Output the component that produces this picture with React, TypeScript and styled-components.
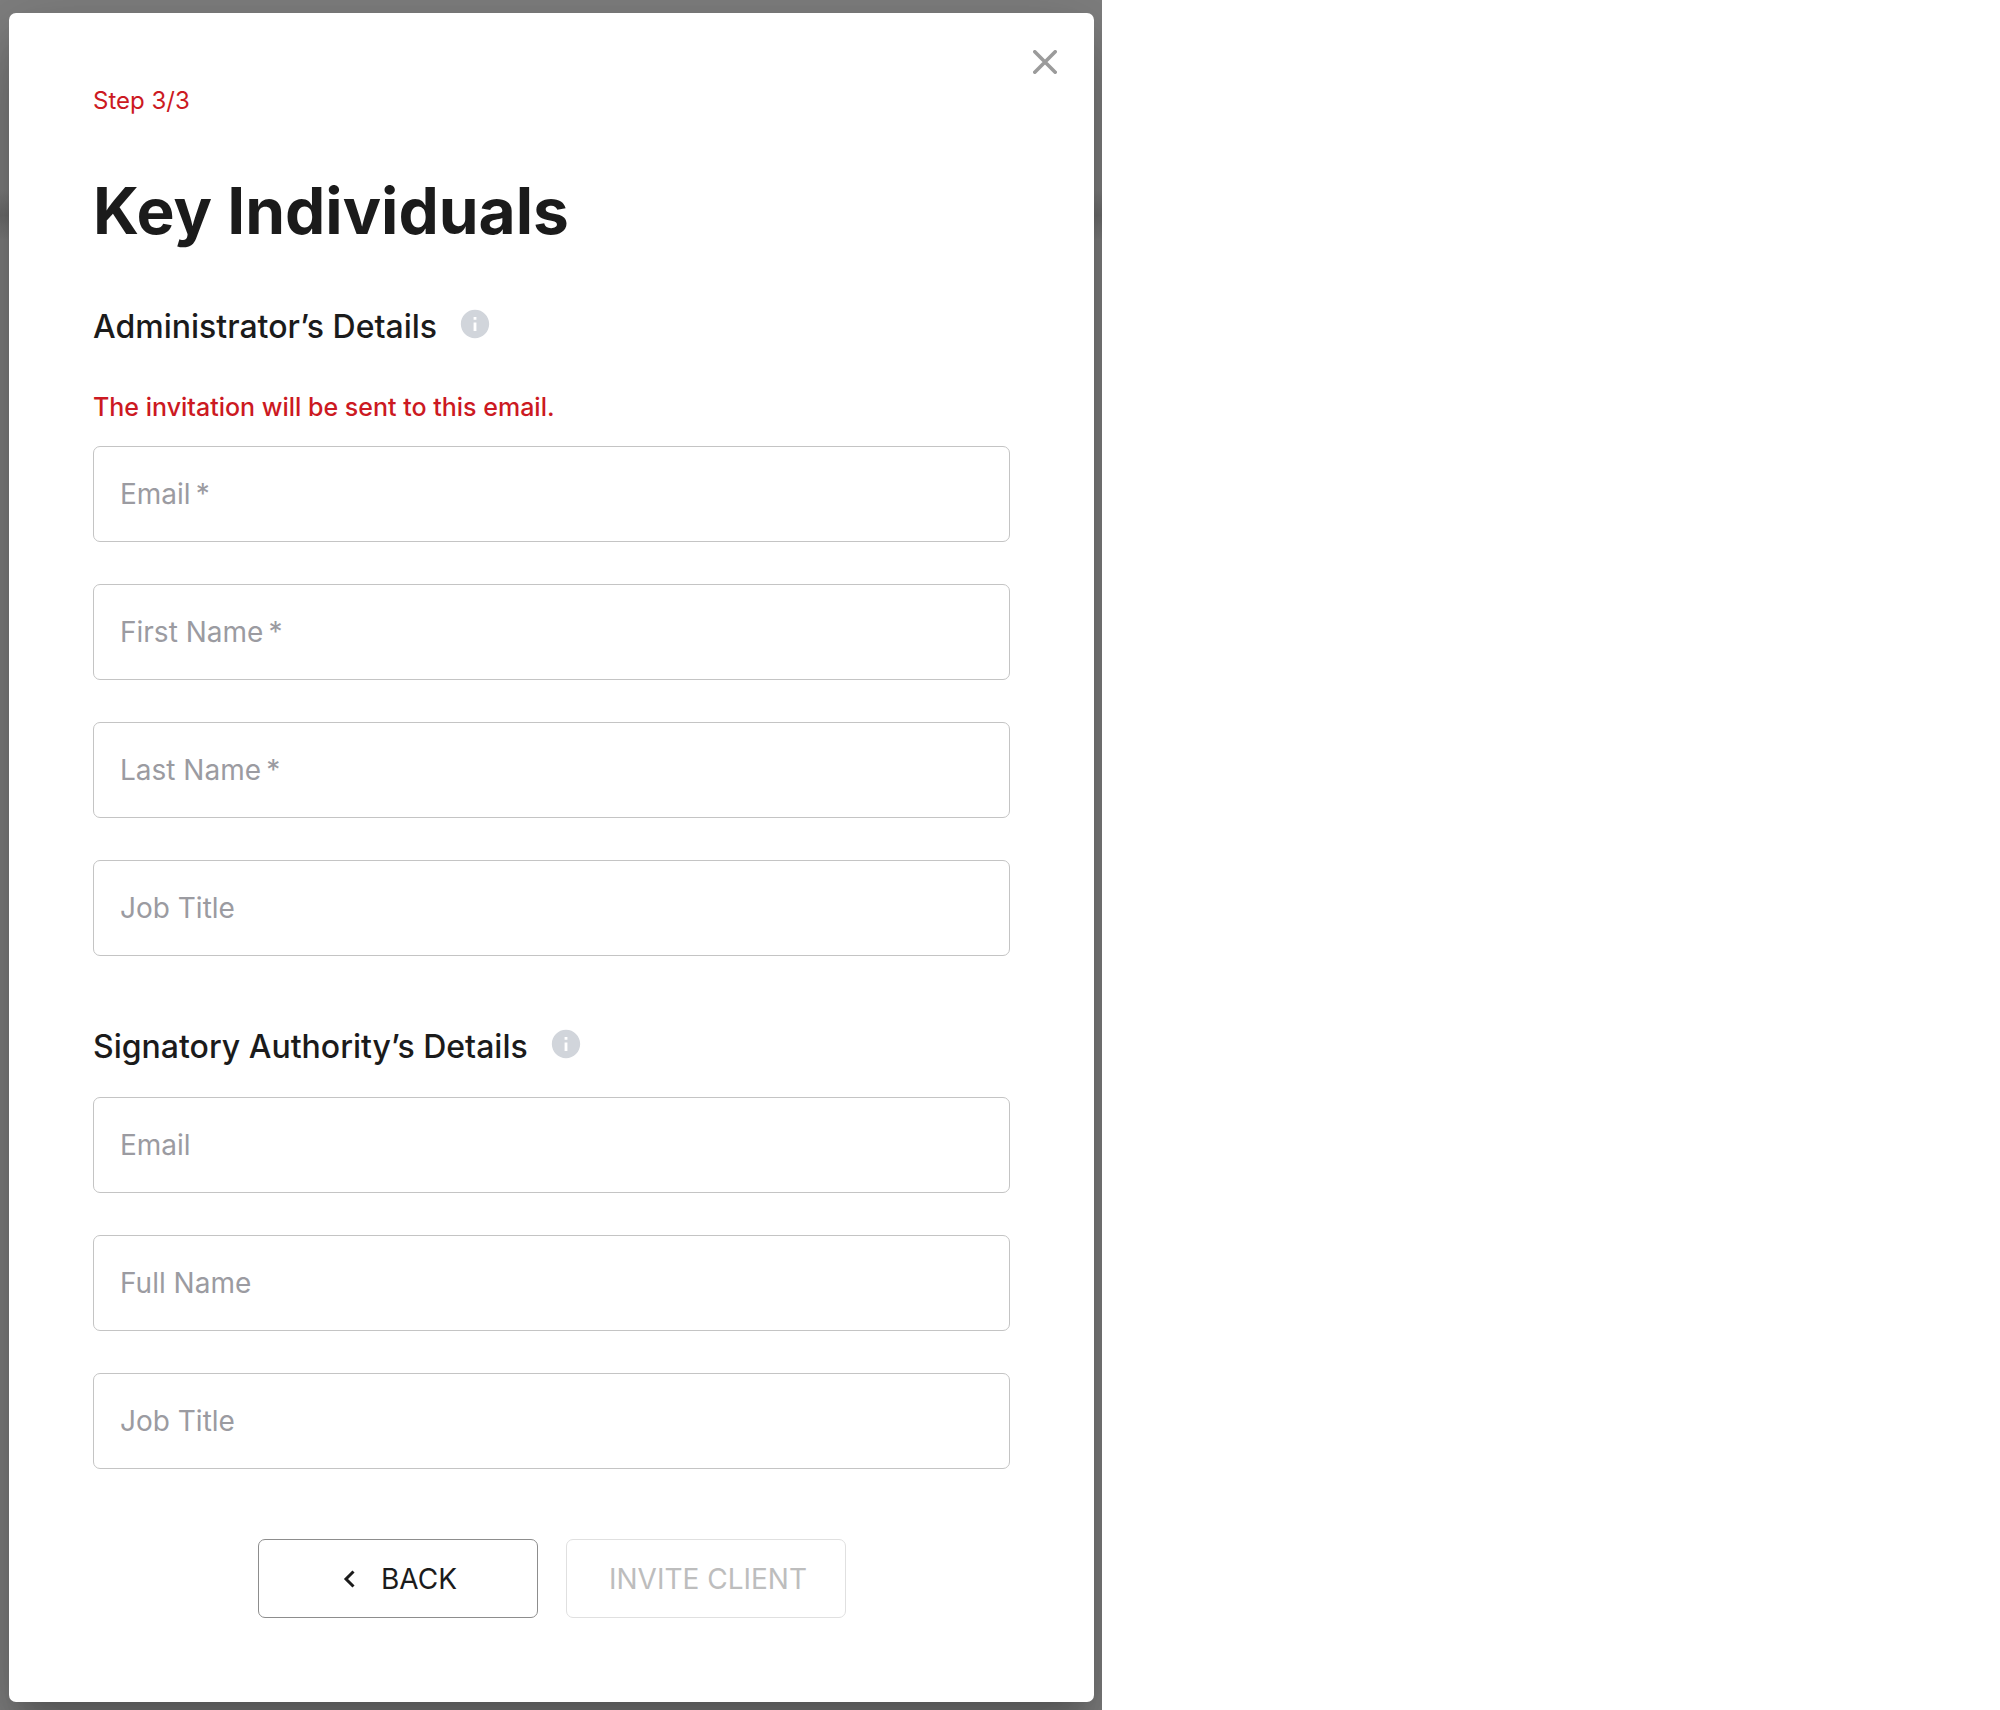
import React, { useId, useState } from "react";
import styled, { createGlobalStyle } from "styled-components";

const GlobalStyle = createGlobalStyle`
  *, *::before, *::after { box-sizing: border-box; }
  body {
    margin: 0;
    background: #fff;
    color: #1b1b1b;
    font-family: Inter, "Liberation Sans", sans-serif;
  }
`;

const Backdrop = styled.div`
  max-width: 1102px;
  padding: 13px 8px 8px 9px;
  overflow: hidden;
  background: linear-gradient(
    #7f7f7f 0,
    #7f7f7f 190px,
    #6f6f6f 215px,
    #7f7f7f 240px,
    #7f7f7f 100%
  );
`;

const Dialog = styled.main`
  position: relative;
  padding: 72px 84px 84px;
  border-radius: 7px;
  background: #fff;
  box-shadow:
    0 19px 26px -12px rgba(0, 0, 0, 0.2),
    0 41px 65px 5px rgba(0, 0, 0, 0.14),
    0 15px 79px 14px rgba(0, 0, 0, 0.12);
`;

const CloseButton = styled.button`
  position: absolute;
  top: 29px;
  right: 29px;
  display: grid;
  place-items: center;
  width: 40px;
  height: 40px;
  padding: 0;
  border: 0;
  background: none;
  cursor: pointer;
`;

const Step = styled.p`
  margin: 0 0 54px;
  color: #cc1922;
  font-size: 24px;
  line-height: 32px;
`;

const Title = styled.h1`
  margin: 0 0 56px;
  font-size: 64px;
  font-weight: 700;
  line-height: 80px;
`;

const Section = styled.section`
  & + & {
    margin-top: 71px;
  }
`;

const SectionHeader = styled.div<{ $space: number }>`
  display: flex;
  align-items: flex-start;
  gap: 21px;
  margin-bottom: ${(p) => p.$space}px;
`;

const SectionTitle = styled.h2`
  margin: 0;
  font-size: 32px;
  font-weight: 500;
  line-height: 40px;
`;

const InfoButton = styled.button`
  display: block;
  width: 34px;
  height: 34px;
  padding: 0;
  border: 0;
  background: none;
  color: #d1d5db;
  cursor: pointer;

  svg {
    display: block;
  }
`;

const Note = styled.p`
  margin: 0 0 23px;
  color: #cc1922;
  font-size: 25px;
  font-weight: 500;
  line-height: 32px;
`;

const FieldList = styled.div`
  display: grid;
  gap: 42px;
`;

const FieldBox = styled.div`
  display: grid;
  align-items: center;
  height: 96px;
  border: 1px solid #c4c4c4;
  border-radius: 7px;

  &:focus-within {
    border-color: #1b1b1b;
  }
`;

const FieldLabel = styled.label<{ $hidden: boolean }>`
  grid-area: 1 / 1;
  padding: 0 26px;
  color: #9b9ba1;
  font-size: 28px;
  line-height: 40px;
  pointer-events: none;
  opacity: ${(p) => (p.$hidden ? 0 : 1)};
`;

const FieldInput = styled.input`
  grid-area: 1 / 1;
  width: 100%;
  height: 100%;
  padding: 0 26px;
  border: 0;
  outline: 0;
  background: transparent;
  color: #1b1b1b;
  font: inherit;
  font-size: 28px;
`;

const Actions = styled.div`
  display: flex;
  justify-content: center;
  gap: 28px;
  margin-top: 70px;
`;

const ActionButton = styled.button`
  display: flex;
  align-items: center;
  justify-content: center;
  gap: 26px;
  width: 280px;
  height: 79px;
  padding: 0 0 0 5px;
  border: 1px solid #8d8d8d;
  border-radius: 7px;
  background: #fff;
  color: #1b1b1b;
  font: inherit;
  font-size: 28px;
  line-height: 40px;
  white-space: nowrap;
  cursor: pointer;

  &:disabled {
    border-color: #e0e0e0;
    color: #bdbdbd;
    cursor: default;
  }
`;

function InfoIcon() {
  return (
    <svg width="34" height="34" viewBox="0 0 24 24" fill="currentColor" aria-hidden="true">
      <path d="M12 2C6.48 2 2 6.48 2 12s4.48 10 10 10 10-4.48 10-10S17.52 2 12 2zm1 15h-2v-6h2v6zm0-8h-2V7h2v2z" />
    </svg>
  );
}

type FieldProps = { label: string; type?: string; required?: boolean };

function Field({ label, type = "text", required = false }: FieldProps) {
  const id = useId();
  const [value, setValue] = useState("");
  return (
    <FieldBox>
      <FieldLabel htmlFor={id} $hidden={value !== ""}>
        {required ? `${label}\u2009*` : label}
      </FieldLabel>
      <FieldInput
        id={id}
        type={type}
        required={required}
        value={value}
        onChange={(e) => setValue(e.target.value)}
      />
    </FieldBox>
  );
}

export default function App() {
  return (
    <>
      <GlobalStyle />
      <Backdrop>
        <Dialog>
          <CloseButton type="button" aria-label="Close">
            <svg width="24" height="24" viewBox="0 0 24 24" aria-hidden="true">
              <path
                d="M1.8 1.8 22.2 22.2M22.2 1.8 1.8 22.2"
                stroke="#9b9b9b"
                strokeWidth="3.6"
                strokeLinecap="round"
              />
            </svg>
          </CloseButton>
          <Step>Step 3/3</Step>
          <Title>Key Individuals</Title>
          <form onSubmit={(e) => e.preventDefault()}>
            <Section>
              <SectionHeader $space={44}>
                <SectionTitle>Administrator’s Details</SectionTitle>
                <InfoButton type="button" aria-label="About the administrator">
                  <InfoIcon />
                </InfoButton>
              </SectionHeader>
              <Note>The invitation will be sent to this email.</Note>
              <FieldList>
                <Field label="Email" type="email" required />
                <Field label="First Name" required />
                <Field label="Last Name" required />
                <Field label="Job Title" />
              </FieldList>
            </Section>
            <Section>
              <SectionHeader $space={30}>
                <SectionTitle>Signatory Authority’s Details</SectionTitle>
                <InfoButton type="button" aria-label="About the signatory authority">
                  <InfoIcon />
                </InfoButton>
              </SectionHeader>
              <FieldList>
                <Field label="Email" type="email" />
                <Field label="Full Name" />
                <Field label="Job Title" />
              </FieldList>
            </Section>
            <Actions>
              <ActionButton type="button">
                <svg width="12" height="18" viewBox="0 0 12 18" fill="none" aria-hidden="true">
                  <path d="M10.5 1.5 3 9l7.5 7.5" stroke="currentColor" strokeWidth="3" />
                </svg>
                BACK
              </ActionButton>
              <ActionButton type="submit" disabled>
                INVITE CLIENT
              </ActionButton>
            </Actions>
          </form>
        </Dialog>
      </Backdrop>
    </>
  );
}
